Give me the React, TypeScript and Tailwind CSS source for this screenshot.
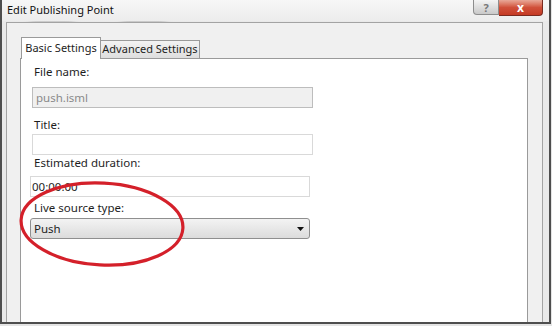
const font = { fontFamily: '"Noto Sans", "Open Sans", sans-serif' };

function Label({ text, className }: { text: string; className?: string }) {
  return (
    <div className={`h-4 pl-[2px] text-[11.5px] leading-4 text-[#1e1e1e] ${className ?? ""}`}>
      {text}
    </div>
  );
}

export default function App() {
  return (
    <div
      className="relative h-[326px] w-[552px] overflow-hidden bg-[#e4e4e4] text-[12px]"
      style={font}
    >
      {/* window frame */}
      <div className="relative flex h-[324px] w-[551px] flex-col border-x-2 border-b-2 border-[#4e4e4e] bg-[#e9e9e9]">
        {/* aero glass smudges */}
        <div className="pointer-events-none absolute left-[28px] top-[17px] h-[6px] w-[44px] rounded-full bg-[#b9b9b9] blur-[3px]" />
        <div className="pointer-events-none absolute left-[120px] top-[-3px] h-[7px] w-[48px] rounded-full bg-[#c4c4c4] blur-[3px]" />
        <div className="pointer-events-none absolute left-[120px] top-[17px] h-[6px] w-[44px] rounded-full bg-[#b5b5b5] blur-[3px]" />
        <div className="pointer-events-none absolute left-[180px] top-[1px] h-[6px] w-[120px] rounded-full bg-[#d6d6d6] blur-[4px]" />

        {/* title bar */}
        <div className="relative flex h-[21px] shrink-0 items-start justify-between bg-gradient-to-b from-[#f7f7f7] to-[#ececec]">
          <div className="pl-[5px] pt-[2px] text-[11px] leading-4 text-[#111]">Edit Publishing Point</div>
          <div className="mr-[6px] flex">
            <div className="flex h-[15px] w-[26px] items-center justify-center rounded-bl-[4px] border border-t-0 border-[#8d8d8d] bg-gradient-to-b from-[#f4f4f4] to-[#c9c9c9] text-[11px] font-bold leading-none text-[#777]">
              ?
            </div>
            <div className="flex h-[16px] w-[44px] items-center justify-center rounded-br-[4px] border border-l-0 border-t-0 border-[#7a2b20] bg-gradient-to-b from-[#e8a898] via-[#d0503a] to-[#c53a24] text-[12px] font-bold leading-none text-white">
              x
            </div>
          </div>
        </div>

        {/* outer panel */}
        <div className="relative ml-[4px] mr-[6px] mt-[1px] flex flex-1 flex-col border border-b-0 border-[#a3a3a3] bg-[#f0f0f0] pl-[13px] pr-[14px] pt-[14px]">
          {/* tabs */}
          <div className="relative z-10 flex h-[21px] items-end pl-[1px]">
            <div className="-mb-px flex h-[22px] w-[80px] items-center justify-center border border-b-0 border-[#9a9a9a] bg-white text-[11px] text-[#1e1e1e]">
              Basic Settings
            </div>
            <div className="flex h-[18px] w-[99px] items-center justify-center border border-l-0 border-b-0 border-[#9a9a9a] bg-gradient-to-b from-[#f3f3f3] to-[#dedede] text-[11px] text-[#1e1e1e]">
              Advanced Settings
            </div>
          </div>

          {/* tab content */}
          <div className="relative flex flex-1 flex-col border border-b-0 border-[#9a9a9a] bg-white pl-[11px] pt-[5px]">
            <Label text="File name:" />
            <div className="mt-[7px] flex h-[21px] w-[281px] items-center border border-[#bdbdbd] bg-[#f0f0f0] pl-[3px] text-[11.5px] text-[#8a8a8a]">
              push.isml
            </div>

            <Label text="Title:" className="mt-[9px]" />
            <div className="mt-[1px] h-[21px] w-[281px] border border-[#d9d9d9] bg-white" />

            <Label text="Estimated duration:" className="mt-[0px]" />
            <div className="-ml-[2px] mt-[5px] flex h-[21px] w-[280px] items-center border border-[#d9d9d9] bg-white pl-[1px] text-[11.5px] text-[#1e1e1e]">
              00:00:00
            </div>

            <Label text="Live source type:" className="mt-[3px]" />
            <div className="-ml-[2px] mt-[2px] flex h-[21px] w-[280px] items-center justify-between rounded-[3px] border border-[#8f8f8f] bg-gradient-to-b from-[#f3f3f3] to-[#dcdcdc] pl-[3px] pr-[5px] text-[11.5px] text-[#1e1e1e]">
              <span>Push</span>
              <svg width="7" height="4" viewBox="0 0 7 4">
                <path d="M0 0h7L3.5 4z" fill="#111" />
              </svg>
            </div>
          </div>
        </div>

        {/* red annotation */}
        <svg
          className="pointer-events-none absolute left-[15px] top-[179px]"
          width="172"
          height="92"
          viewBox="0 0 172 92"
        >
          <ellipse
            cx="85"
            cy="45"
            rx="81"
            ry="41"
            transform="rotate(3 85 45)"
            fill="none"
            stroke="#d4202a"
            strokeWidth="3.2"
          />
        </svg>
      </div>
    </div>
  );
}
